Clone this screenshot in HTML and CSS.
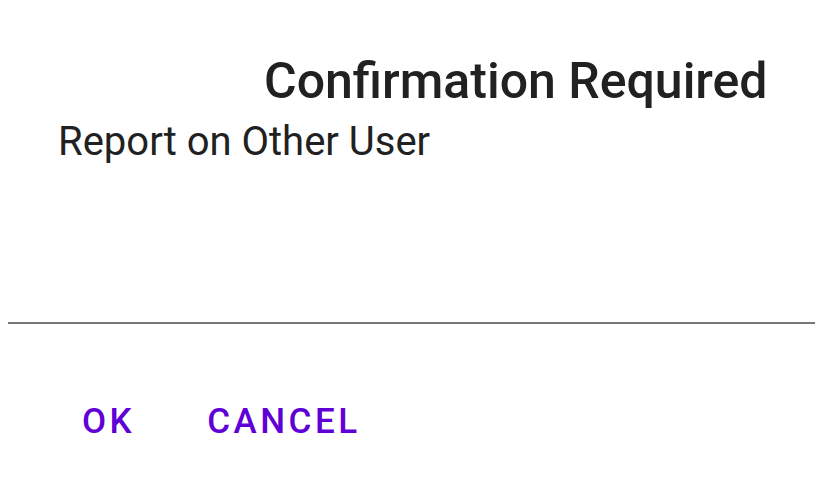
FILE: index.html
```html
<!DOCTYPE html>
<html>
<head>
<meta charset="utf-8">
<link rel="stylesheet" href="styles.css">
</head>
<body>
<div class="dialog">
  <div class="title">Confirmation Required</div>
  <div class="message">Report on Other User</div>
  <div class="divider"></div>
  <div class="actions">
    <button class="btn btn-ok">OK</button>
    <button class="btn btn-cancel">CANCEL</button>
  </div>
</div>
</body>
</html>
```
FILE: styles.css
```css
html, body {
  margin: 0;
  padding: 0;
  background: #ffffff;
}
body {
  width: 821px;
  height: 489px;
  overflow: hidden;
  font-family: Roboto, "Noto Sans", sans-serif;
}
.dialog {
  display: flex;
  flex-direction: column;
}
.title {
  padding-left: 264px;
  margin-top: 51px;
  font-size: 50px;
  line-height: 60px;
  font-weight: 500;
  color: #212121;
}
.message {
  padding-left: 58px;
  margin-top: 6px;
  font-size: 40px;
  line-height: 50px;
  color: #212121;
}
.divider {
  margin: 155px 6px 0 8px;
  height: 2px;
  background: #777777;
}
.actions {
  display: flex;
  padding-left: 82px;
  margin-top: 78px;
  gap: 72px;
}
.btn {
  border: 0;
  background: none;
  padding: 0;
  font-family: Roboto, "Noto Sans", sans-serif;
  font-weight: 500;
  font-size: 35px;
  line-height: 40px;
  letter-spacing: 3.5px;
  color: #5f00d6;
}
```
